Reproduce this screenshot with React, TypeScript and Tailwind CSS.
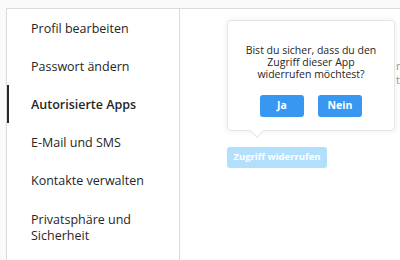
const items = [
  "Profil bearbeiten",
  "Passwort ändern",
  "Autorisierte Apps",
  "E-Mail und SMS",
  "Kontakte verwalten",
];

export default function App() {
  return (
    <div
      className="w-[400px] h-[260px] overflow-hidden bg-[#fafafa] pt-2 pl-[6px] text-[#262626]"
      style={{ fontFamily: '"Open Sans", "Noto Sans", Arial, sans-serif' }}
    >
      <div className="flex h-[300px] w-[420px] bg-white border border-[#dbdbdb]">
        {/* Sidebar */}
        <ul className="w-[173px] shrink-0 border-r border-[#dbdbdb]">
          {items.map((label) => {
            const active = label === "Autorisierte Apps";
            return (
              <li
                key={label}
                className={
                  active
                    ? "h-[38px] flex items-center pt-[3px] pl-[22px] border-l-2 border-[#262626] font-semibold text-[12.5px]"
                    : "h-[38px] flex items-center pt-[3px] pl-[22px] border-l-2 border-transparent text-[12.5px]"
                }
              >
                {label}
              </li>
            );
          })}
          <li className="pl-[22px] pt-[13px] border-l-2 border-transparent text-[12.5px] leading-[16px]">
            <div>Privatsphäre und</div>
            <div>Sicherheit</div>
          </li>
        </ul>

        {/* Content */}
        <div className="relative flex-1">
          <div className="absolute left-[216px] top-[50px] text-[11px] leading-[14px] text-[#999] whitespace-nowrap">
            <div>n</div>
            <div>te</div>
          </div>

          <div className="pl-[47px] pt-[133px]">
            <button className="h-[21px] w-[100px] rounded-[3px] bg-[#b2dffc] text-white text-[9.5px] font-bold whitespace-nowrap">
              Zugriff widerrufen
            </button>
          </div>

          {/* Popover */}
          <div className="absolute left-[47px] top-[11px] w-[168px] h-[111px] rounded-[4px] bg-white border border-[#e6e6e6] shadow-[0_0_6px_rgba(0,0,0,0.08)] flex flex-col items-center pt-[23px]">
            <div className="text-center text-[10.5px] leading-[12px] whitespace-nowrap">
              <div>Bist du sicher, dass du den</div>
              <div>Zugriff dieser App</div>
              <div>widerrufen möchtest?</div>
            </div>
            <div className="flex gap-[14px] mt-[15px]">
              <button className="w-[44px] h-[22px] rounded-[3px] bg-[#3897f0] text-white text-[10.5px] font-bold">
                Ja
              </button>
              <button className="w-[44px] h-[22px] rounded-[3px] bg-[#3897f0] text-white text-[10.5px] font-bold">
                Nein
              </button>
            </div>
            <div className="absolute left-[24px] bottom-[-6px] w-[10px] h-[10px] rotate-45 bg-white border-r border-b border-[#e6e6e6]" />
          </div>
        </div>
      </div>
    </div>
  );
}
